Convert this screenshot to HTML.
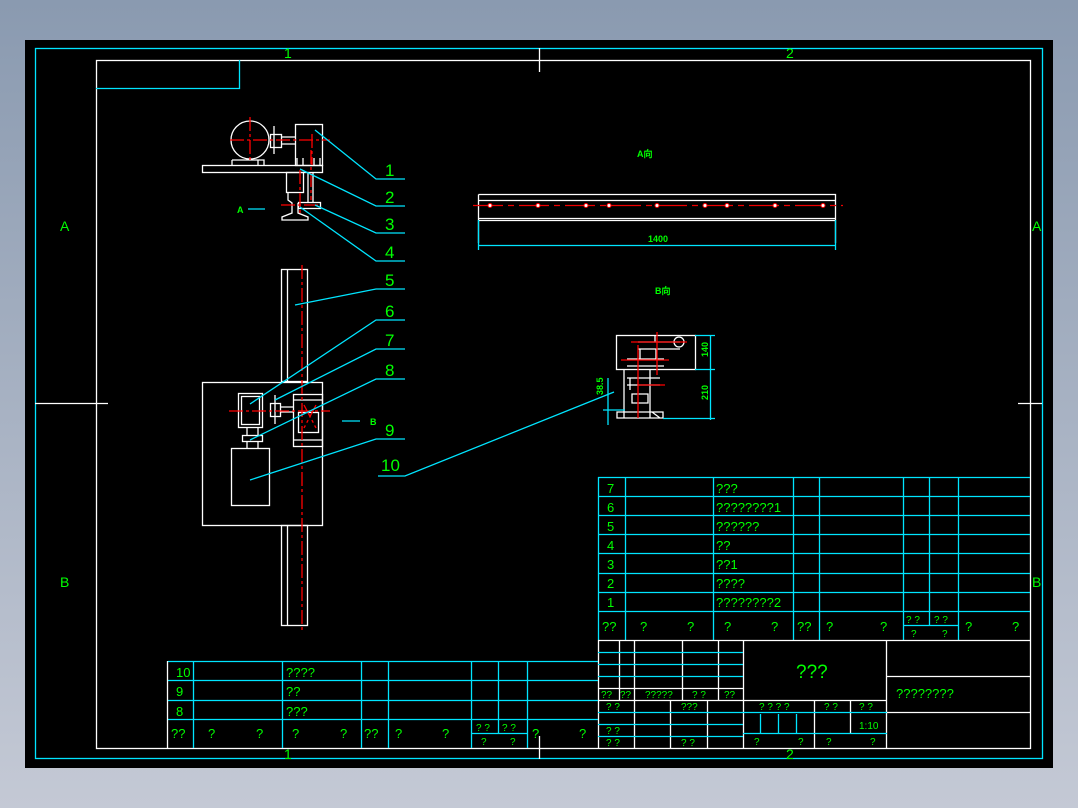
<!DOCTYPE html>
<html><head><meta charset="utf-8"><style>
html,body{margin:0;padding:0;width:1078px;height:808px;overflow:hidden;background:linear-gradient(#8a9ab0,#c4c9d5);}
svg{position:absolute;left:0;top:0}
text{font-family:"Liberation Sans Narrow","Liberation Sans",sans-serif;fill:#00ff00}
</style></head><body>
<svg width="1078" height="808" viewBox="0 0 1078 808">
<rect x="25" y="40" width="1028" height="728" fill="#000"/>
<g fill="none" stroke-width="1.3">
<!-- frames -->
<rect x="35.5" y="48.5" width="1007" height="710" stroke="#00e5ff"/>
<rect x="96.5" y="60.5" width="934" height="688" stroke="#fff"/>
<path d="M96 88.5H239.5V60" stroke="#00e5ff"/>
<path d="M539.5 48V72M539.5 736V759M35 403.5H108M1018 403.5H1042" stroke="#fff"/>

<!-- top mechanism -->
<g stroke="#fff">
<circle cx="250" cy="140" r="19"/>
<rect x="202.5" y="165.5" width="120" height="7"/>
<rect x="295.5" y="124.5" width="27" height="41"/>
<rect x="270.5" y="134.5" width="11" height="13"/>
<path d="M274 126V154M281 137H295M281 144H295"/>
<path d="M232 160V165M238 160H264V165M232 160H238M258 160V165M297 158V165M303 158V165M314 158V165M320 158V165"/>
<rect x="286.5" y="172.5" width="17" height="20"/>
<path d="M308 172V203M313 172V203"/>
<rect x="298.5" y="202.5" width="22" height="6"/>
<path d="M288 193V200L292 203V213L282 217V220H308V217L298 213V203"/>
<!-- column -->
<rect x="281.5" y="269.5" width="26" height="112"/>
<path d="M287.5 269V382"/>
<rect x="281.5" y="525.5" width="26" height="100"/>
<path d="M287.5 525V626"/>
<rect x="202.5" y="382.5" width="120" height="143"/>
<rect x="238.5" y="393.5" width="24" height="34"/>
<rect x="241.5" y="396.5" width="18" height="28"/>
<rect x="270.5" y="403.5" width="10" height="13"/>
<path d="M275 395V424M281 407H293M281 412H293"/>
<rect x="242.5" y="435.5" width="20" height="6"/>
<path d="M247 428V435M258 428V435M247 442V448M258 442V448"/>
<rect x="231.5" y="448.5" width="38" height="57"/>
<rect x="293.5" y="394.5" width="29" height="52"/>
<path d="M293 400H322M293 440H322"/>
<rect x="298.5" y="412.5" width="20" height="20"/>
</g>
<g stroke="#f00" stroke-dasharray="14 3 3 3">
<path d="M230 140H330M250 117V163M312 134V165M311 150V200M300 170V216M281 205H320"/>
<path d="M302 265V630M229 411H330M304 405L316 428M316 405L304 428"/>
</g>
<!-- leaders -->
<g stroke="#00e5ff">
<path d="M315 130L376 179H405M300 169L376 206H405M315 205L376 233H405M300 207L376 261H405"/>
<path d="M295 305L376 289H405M250 404L376 320H405M275 400L376 349H405M250 440L376 379H405M250 480L376 439H405M378 476H405L614 392"/>
<path d="M248 209H265M342 421H360"/>
</g>
<!-- right top view rail -->
<g stroke="#fff">
<path d="M478.5 194.5H835.5V243M478.5 194.5V243M478 200.5H835M478 218.5H835M478 220.5H835"/>
</g>
<path d="M473 205.5H843" stroke="#e00" stroke-dasharray="30 5 6 5"/>
<g fill="#fff" stroke="#f00" stroke-width="1"><circle cx="490" cy="205.5" r="2"/><circle cx="538" cy="205.5" r="2"/><circle cx="586" cy="205.5" r="2"/><circle cx="609" cy="205.5" r="2"/><circle cx="657" cy="205.5" r="2"/><circle cx="705" cy="205.5" r="2"/><circle cx="727" cy="205.5" r="2"/><circle cx="775" cy="205.5" r="2"/><circle cx="823" cy="205.5" r="2"/></g>
<path d="M478.5 220V250M835.5 220V250M478 245.5H835" stroke="#00e5ff"/>
<!-- side view B -->
<g stroke="#fff">
<rect x="616.5" y="335.5" width="79" height="34"/>
<path d="M638 342H680M638 349H680M627 359H664M627 366H664M640 349V359M656 349V359M655 335V342"/>
<circle cx="679" cy="342" r="5"/>
<path d="M624 369V418M650 369V418M627 378H660M627 385H660M630 378V390M632 394H648V403H632ZM617 412H663V418H617ZM652 412L660 418"/>
</g>
<g stroke="#f00"><path d="M631 342H687M621 360H669M638 385H665M638 345V418M657 332V375"/></g>
<g stroke="#00e5ff"><path d="M695 335.5H715M695 369.5H715M663 418.5H715M710.5 335V420M608 378V425M603 410H625"/></g>

<!-- right parts table -->
<g stroke="#00e5ff">
<path d="M598 477.5H1030M598 496.5H1030M598 515.5H1030M598 534.5H1030M598 553.5H1030M598 573.5H1030M598 592.5H1030M598 611.5H1030"/>
<path d="M598.5 477V640M625.5 477V640M713.5 477V640M793.5 477V640M819.5 477V640M903.5 477V640M929.5 477V625M958.5 477V640M903 625.5H958"/>
</g>
<g stroke="#fff">
<path d="M598 640.5H1030M598.5 640V748M743.5 640V748M886.5 640V748M887 676.5H1030M887 712.5H1030M598 688.5H743M598 700.5H887"/>
<path d="M619.5 640V700M634.5 640V748M682.5 640V700M718.5 640V700M670.5 700V748M707.5 700V748M814.5 700V748M850.5 700V733"/>
</g>
<g stroke="#00e5ff"><path d="M598 652.5H743M598 664.5H743M598 676.5H743M598 712.5H887M598 724.5H743M598 736.5H743M743 733.5H887M760.5 714V733M778.5 714V733M796.5 714V733"/></g>
<!-- left parts table -->
<g stroke="#00e5ff">
<path d="M168 661.5H598M168 680.5H598M168 700.5H598M168 719.5H598"/>
<path d="M193.5 661V748M282.5 661V748M361.5 661V748M388.5 661V748M471.5 661V748M498.5 661V733M527.5 661V748M471 733.5H527"/>
</g>
<path d="M167.5 661V748" stroke="#fff"/>
</g>

<!-- text -->
<g font-size="14">
<text x="284" y="58">1</text><text x="786" y="58">2</text>
<text x="284" y="759">1</text><text x="786" y="759">2</text>
<text x="60" y="231">A</text><text x="1032" y="231">A</text>
<text x="60" y="587">B</text><text x="1032" y="587">B</text>
</g>
<g font-size="17">
<text x="385" y="176">1</text><text x="385" y="203">2</text><text x="385" y="230">3</text><text x="385" y="258">4</text><text x="385" y="286">5</text><text x="385" y="317">6</text><text x="385" y="346">7</text><text x="385" y="376">8</text><text x="385" y="436">9</text><text x="381" y="471">10</text>
</g>
<g font-size="9" font-weight="bold">
<text x="237" y="213">A</text><text x="370" y="425">B</text><text x="637" y="157">A向</text><text x="655" y="294">B向</text><text x="648" y="242">1400</text>
<text x="708" y="357" transform="rotate(-90 708 357)">140</text><text x="708" y="400" transform="rotate(-90 708 400)">210</text><text x="603" y="395" transform="rotate(-90 603 395)">38.5</text>
</g>
<g font-size="13">
<text x="607" y="493">7</text><text x="607" y="512">6</text><text x="607" y="531">5</text><text x="607" y="550">4</text><text x="607" y="569">3</text><text x="607" y="588">2</text><text x="607" y="607">1</text>
<text x="716" y="493">???</text><text x="716" y="512">????????1</text><text x="716" y="531">??????</text><text x="716" y="550">??</text><text x="716" y="569">??1</text><text x="716" y="588">????</text><text x="716" y="607">????????2</text>
<text x="602" y="631">??</text><text x="640" y="631">?</text><text x="687" y="631">?</text><text x="724" y="631">?</text><text x="771" y="631">?</text><text x="797" y="631">??</text><text x="826" y="631">?</text><text x="880" y="631">?</text><text x="965" y="631">?</text><text x="1012" y="631">?</text>
<text x="176" y="677">10</text><text x="176" y="696">9</text><text x="176" y="716">8</text>
<text x="286" y="677">????</text><text x="286" y="696">??</text><text x="286" y="716">???</text>
<text x="171" y="738">??</text><text x="208" y="738">?</text><text x="256" y="738">?</text><text x="292" y="738">?</text><text x="340" y="738">?</text><text x="364" y="738">??</text><text x="395" y="738">?</text><text x="442" y="738">?</text><text x="532" y="738">?</text><text x="579" y="738">?</text>
<text x="896" y="698">????????</text>
</g>
<g font-size="10">
<text x="906" y="623">? ?</text><text x="934" y="623">? ?</text><text x="911" y="637">?</text><text x="942" y="637">?</text>
<text x="476" y="731">? ?</text><text x="502" y="731">? ?</text><text x="481" y="745">?</text><text x="510" y="745">?</text>
<text x="601" y="698">??</text><text x="620" y="698">??</text><text x="645" y="698">?????</text><text x="692" y="698">? ?</text><text x="724" y="698">??</text>
<text x="606" y="710">? ?</text><text x="681" y="710">???</text><text x="606" y="734">? ?</text><text x="606" y="746">? ?</text><text x="681" y="746">? ?</text>
<text x="759" y="710">? ? ? ?</text><text x="824" y="710">? ?</text><text x="859" y="710">? ?</text><text x="859" y="729">1:10</text>
<text x="754" y="745">?</text><text x="798" y="745">?</text><text x="826" y="745">?</text><text x="870" y="745">?</text>
</g>
<text x="796" y="678" font-size="19">???</text>
</svg>
</body></html>
